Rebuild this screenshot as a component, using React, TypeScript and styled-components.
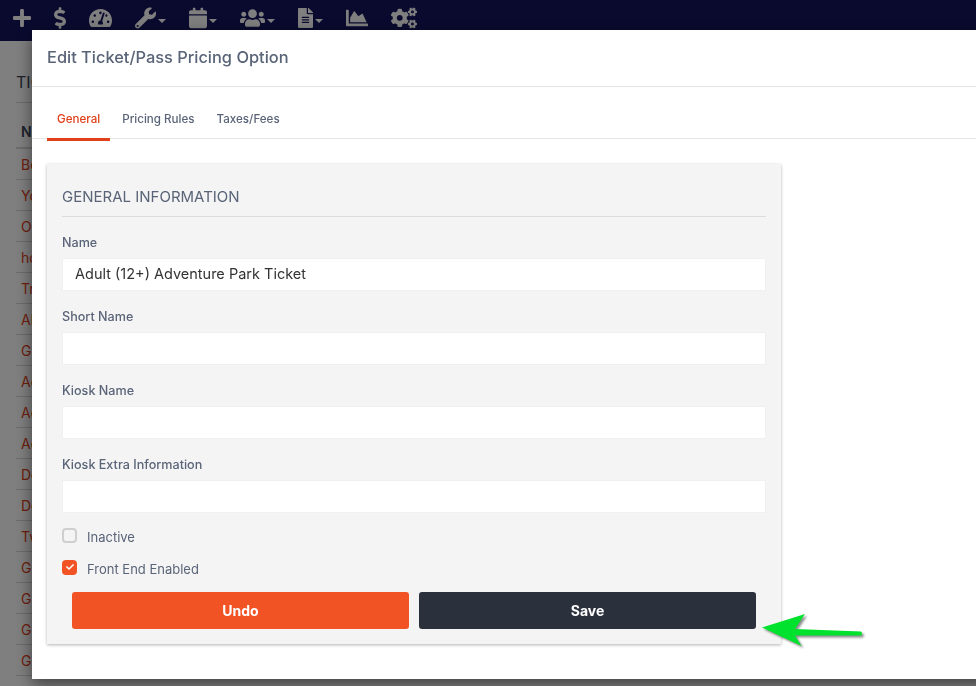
import { ComponentType } from "react";
import styled, { createGlobalStyle } from "styled-components";
import {
  FaPlus,
  FaDollarSign,
  FaTachometerAlt,
  FaWrench,
  FaCalendar,
  FaUsers,
  FaFileAlt,
  FaChartArea,
  FaCogs,
  FaCheck,
} from "react-icons/fa";

const GlobalStyle = createGlobalStyle`
  html, body {
    margin: 0;
    height: 100%;
    overflow: hidden;
    background: #fff;
    font-family: Inter, "Liberation Sans", sans-serif;
  }
  * { box-sizing: border-box; }
`;

const TopBar = styled.header`
  height: 41px;
  background: #14145f;
  color: #fff;
  display: flex;
  align-items: flex-start;
  gap: 23px;
  padding: 7px 0 0 13px;
`;

const NavItem = styled.span<{ $w: number }>`
  display: flex;
  align-items: center;
  height: 22px;
  svg {
    display: block;
    flex: none;
    width: ${(p) => p.$w}px;
    height: 22px;
  }
`;

const Caret = styled.i`
  width: 0;
  height: 0;
  margin: 6px 0 0 2px;
  border-left: 4px solid transparent;
  border-right: 4px solid transparent;
  border-top: 4px solid #fff;
`;

const ListPanel = styled.section`
  padding: 30px 0 0 16px;
  color: #3c4358;
`;

const ListTitle = styled.div`
  font-size: 16px;
  height: 32px;
  line-height: 22px;
  border-bottom: 1px solid #d8d8d8;
`;

const ListRow = styled.div<{ $head?: boolean }>`
  height: 31px;
  line-height: 31px;
  padding-left: 5px;
  font-size: 14px;
  border-bottom: 1px solid #d8d8d8;
  font-weight: ${(p) => (p.$head ? 600 : 400)};
  color: ${(p) => (p.$head ? "#3c4358" : "#e0401a")};
`;

const HeadRow = styled(ListRow)`
  height: 46px;
  line-height: 58px;
  border-bottom-width: 2px;
`;

const Backdrop = styled.div`
  position: fixed;
  inset: 0;
  background: rgba(0, 0, 0, 0.5);
`;

const Modal = styled.div`
  position: fixed;
  left: 32px;
  top: 30px;
  width: 1100px;
  height: 649px;
  background: #fff;
  box-shadow: 0 5px 15px rgba(0, 0, 0, 0.5);
`;

const ModalHeader = styled.div`
  height: 57px;
  padding: 0 0 2px 15px;
  display: flex;
  align-items: center;
  border-bottom: 1px solid #e5e5e5;
  font-size: 16.4px;
  font-weight: 500;
  color: #5a6478;
`;

const Tabs = styled.nav`
  height: 52px;
  padding-left: 15px;
  display: flex;
  gap: 2px;
  border-bottom: 1px solid #e5e5e5;
`;

const Tab = styled.div<{ $active?: boolean }>`
  height: 54px;
  padding: 12px 10px 0;
  display: flex;
  align-items: center;
  font-size: 11.6px;
  font-weight: 500;
  color: ${(p) => (p.$active ? "#e0401a" : "#5a6478")};
  border-bottom: 3px solid ${(p) => (p.$active ? "#e0401a" : "transparent")};
`;

const Card = styled.div`
  width: 734px;
  height: 480px;
  margin: 25px 0 0 15px;
  padding: 0 15px;
  background: #f4f4f4;
  box-shadow: 0 1px 3px rgba(0, 0, 0, 0.3);
`;

const CardTitle = styled.h3`
  margin: 0 0 15px;
  height: 53px;
  line-height: 66px;
  font-size: 15px;
  font-weight: 400;
  color: #5a6478;
  border-bottom: 1px solid #dcdce0;
`;

const Field = styled.div`
  height: 74px;
`;

const Label = styled.label`
  display: block;
  height: 26px;
  line-height: 21px;
  font-size: 12.6px;
  font-weight: 500;
  color: #5a6478;
`;

const TextInput = styled.input`
  display: block;
  width: 100%;
  height: 33px;
  padding: 0 12px 2px;
  border: 1px solid #f0f0f0;
  background: #fff;
  font: 400 14.5px Inter, "Liberation Sans", sans-serif;
  color: #333;
  outline: none;
`;

const CheckRow = styled.div`
  height: 32px;
  display: flex;
  align-items: center;
  gap: 10px;
  font-size: 13px;
  font-weight: 400;
  color: #5a6478;
`;

const CheckBox = styled.span<{ $on?: boolean }>`
  width: 15px;
  height: 15px;
  margin-bottom: 4px;
  border-radius: 4px;
  display: flex;
  align-items: center;
  justify-content: center;
  color: #fff;
  font-size: 8px;
  background: ${(p) => (p.$on ? "#f25325" : "#f4f4f4")};
  border: ${(p) => (p.$on ? "none" : "2px solid #cfcfcf")};
`;

const Checks = styled.div`
  margin-top: -7px;
`;

const Actions = styled.div`
  display: flex;
  gap: 10px;
  padding: 7px 10px 0;
`;

const Button = styled.button<{ $dark?: boolean }>`
  flex: 1;
  height: 37px;
  border: none;
  border-radius: 3px;
  color: #fff;
  font: 700 14px Inter, "Liberation Sans", sans-serif;
  background: ${(p) => (p.$dark ? "#2b303d" : "#f25325")};
`;

const Arrow = styled.svg`
  position: fixed;
  left: 755px;
  top: 605px;
  filter: drop-shadow(2px 2px 1px rgba(0, 0, 0, 0.45));
`;

const navItems: { Icon: ComponentType; w: number; caret?: boolean }[] = [
  { Icon: FaPlus, w: 18 },
  { Icon: FaDollarSign, w: 12 },
  { Icon: FaTachometerAlt, w: 23 },
  { Icon: FaWrench, w: 21, caret: true },
  { Icon: FaCalendar, w: 18, caret: true },
  { Icon: FaUsers, w: 25, caret: true },
  { Icon: FaFileAlt, w: 15, caret: true },
  { Icon: FaChartArea, w: 22 },
  { Icon: FaCogs, w: 26 },
];

const rows = ["Be", "Yo", "O", "ho", "Tr", "Al", "Gi", "Ad", "Ad", "Ad", "De", "De", "Tw", "G", "G", "G", "G"];
const fields = ["Short Name", "Kiosk Name", "Kiosk Extra Information"];

export default function App() {
  return (
    <>
      <GlobalStyle />
      <TopBar>
        {navItems.map(({ Icon, w, caret }, i) => (
          <NavItem key={i} $w={w}>
            <Icon />
            {caret && <Caret />}
          </NavItem>
        ))}
      </TopBar>
      <ListPanel>
        <ListTitle>TIC</ListTitle>
        <HeadRow $head>Na</HeadRow>
        {rows.map((r, i) => (
          <ListRow key={i}>{r}</ListRow>
        ))}
      </ListPanel>
      <Backdrop />
      <Modal>
        <ModalHeader>Edit Ticket/Pass Pricing Option</ModalHeader>
        <Tabs>
          <Tab $active>General</Tab>
          <Tab>Pricing Rules</Tab>
          <Tab>Taxes/Fees</Tab>
        </Tabs>
        <Card>
          <CardTitle>GENERAL INFORMATION</CardTitle>
          <Field>
            <Label>Name</Label>
            <TextInput readOnly value="Adult (12+) Adventure Park Ticket" />
          </Field>
          {fields.map((f) => (
            <Field key={f}>
              <Label>{f}</Label>
              <TextInput readOnly />
            </Field>
          ))}
          <Checks>
            <CheckRow>
              <CheckBox />
              Inactive
            </CheckRow>
            <CheckRow>
              <CheckBox $on>
                <FaCheck />
              </CheckBox>
              Front End Enabled
            </CheckRow>
          </Checks>
          <Actions>
            <Button>Undo</Button>
            <Button $dark>Save</Button>
          </Actions>
        </Card>
      </Modal>
      <Arrow width="115" height="50" viewBox="755 605 115 50">
        <path
          d="M762 627.5 L805 614 L795 629 L861 631.5 Q863 633.5 861 635.5 L795 635.5 L801.5 646 Z"
          fill="#00e22e"
        />
      </Arrow>
    </>
  );
}
